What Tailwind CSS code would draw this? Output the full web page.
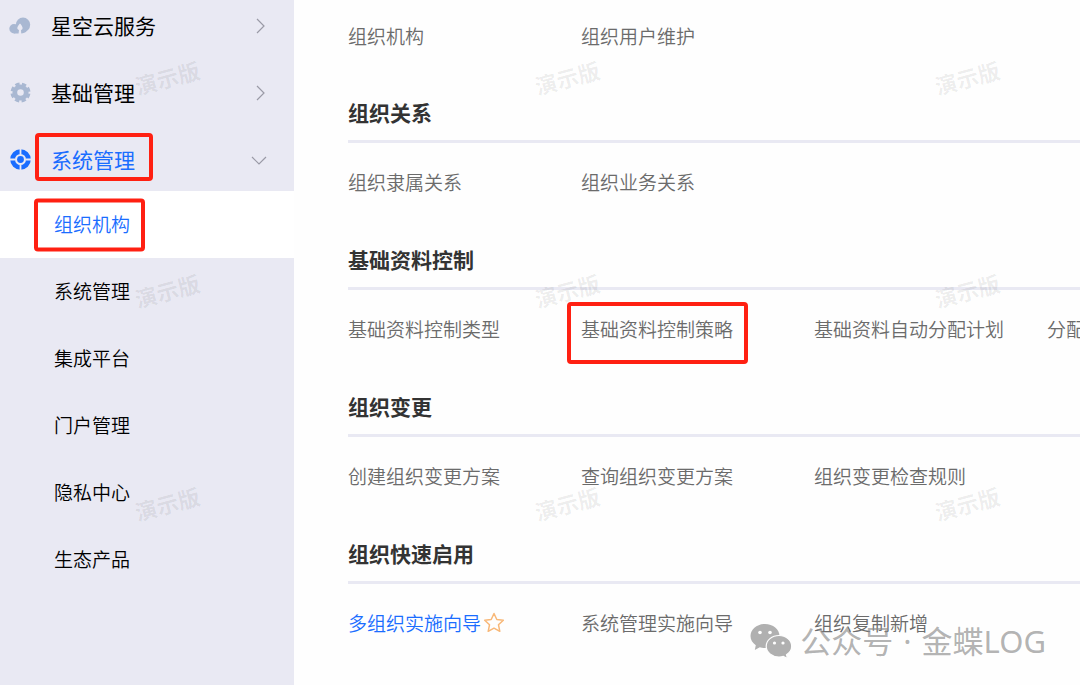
<!DOCTYPE html>
<html lang="zh-CN">

<head>
    <meta charset="UTF-8" />
    <meta name="viewport" content="width=device-width, initial-scale=1.0" />
    <title>系统管理 - 组织机构</title>
    <script src="https://cdn.jsdelivr.net/npm/@tailwindcss/browser@4"></script>
</head>

<body class="font-['Noto_Sans_CJK_SC',sans-serif] bg-[#fefefe] text-[#6b6b6b] overflow-hidden">
    <div class="relative flex h-screen overflow-hidden">

        <!-- Sidebar -->
        <aside class="w-[294px] shrink-0 bg-[#e9e9f3] text-black">
            <nav class="-mt-[10px] flex flex-col">
                <button type="button" class="flex h-[67px] w-full items-center pt-1 pl-2 pr-[27px] text-[21px]">
                    <svg viewBox="0 0 24 24" class="h-6 w-6 shrink-0" fill="#a9b8d2" aria-hidden="true">
                        <circle cx="6" cy="14.800" r="4.700" />
                        <circle cx="15" cy="10.800" r="7.200" />
                        <path d="M6 19.500l3-9 8 2 2 4c-1.500 2.200-3.500 3-6 3z" />
                        <path d="M12 9.500c1.300 1.400 2.600 3 2.600 4.600 0 1.200-.8 1.900-1.600 1.900l.3 4.200h-2.800L11 16c-.9 0-1.700-.8-1.700-1.900 0-1.600 1.500-3.200 2.700-4.600z" fill="#e9e9f3" />
                    </svg>
                    <span class="ml-[19px]">星空云服务</span>
                    <svg viewBox="0 0 16 16" class="ml-auto h-4 w-4" fill="none" stroke="#9a9aa6" stroke-width="1.200" aria-hidden="true">
                        <path d="M6 1l7 7-7 7" />
                    </svg>
                </button>
                <button type="button" class="flex h-[67px] w-full items-center pt-1 pl-2 pr-[27px] text-[21px]">
                    <svg viewBox="0 0 24 24" class="h-6 w-6 shrink-0" fill="none" stroke="#a9b8d2" aria-hidden="true">
                        <circle cx="12.500" cy="11.500" r="5.700" stroke-width="4.800" />
                        <circle cx="12.500" cy="11.500" r="8.300" stroke-width="3.400" stroke-dasharray="4.200 2.320" stroke-dashoffset="-1.160" />
                    </svg>
                    <span class="ml-[19px]">基础管理</span>
                    <svg viewBox="0 0 16 16" class="ml-auto h-4 w-4" fill="none" stroke="#9a9aa6" stroke-width="1.200" aria-hidden="true">
                        <path d="M6 1l7 7-7 7" />
                    </svg>
                </button>
                <button type="button" aria-expanded="true" class="flex h-[67px] w-full items-center pt-1 pl-2 pr-[27px] text-[21px] text-[#1a6dff]">
                    <svg viewBox="0 0 24 24" class="h-6 w-6 shrink-0" aria-hidden="true">
                        <circle cx="12.500" cy="11.500" r="7.900" fill="none" stroke="#1a6dff" stroke-width="4.800" />
                        <path d="M12.500 .5v6M12.500 16.500v6M1.500 11.500h6M17.500 11.500h6" stroke="#e9e9f3" stroke-width="1.800" />
                        <circle cx="12.500" cy="11.500" r="3.400" fill="#1a6dff" />
                    </svg>
                    <span class="relative ml-[19px]">系统管理
                        <i class="absolute -left-4 top-1/2 h-[48px] w-[118px] -translate-y-[27px] rounded border-4 border-[#ff2012]"></i>
                    </span>
                    <svg viewBox="0 0 16 16" class="ml-auto h-4 w-4" fill="none" stroke="#9a9aa6" stroke-width="1.200" aria-hidden="true">
                        <path d="M1 5l7 7 7-7" />
                    </svg>
                </button>

                <div class="flex flex-col text-[19px] font-[350]">
                    <a href="#" class="flex h-[67px] items-center bg-white pl-[54px] text-[#1a6dff]">
                        <span class="relative">组织机构
                            <i class="absolute -left-5 top-1/2 h-[53px] w-[111px] -translate-y-1/2 rounded border-4 border-[#ff2012]"></i>
                        </span>
                    </a>
                    <a href="#" class="flex h-[67px] items-center pl-[54px]">系统管理</a>
                    <a href="#" class="flex h-[67px] items-center pl-[54px]">集成平台</a>
                    <a href="#" class="flex h-[67px] items-center pl-[54px]">门户管理</a>
                    <a href="#" class="flex h-[67px] items-center pl-[54px]">隐私中心</a>
                    <a href="#" class="flex h-[67px] items-center pl-[54px]">生态产品</a>
                </div>
            </nav>
        </aside>

        <!-- Function list -->
        <main class="min-w-0 flex-1 overflow-hidden pl-[54px] pt-[21px] text-[19px] font-[350] leading-[30px] whitespace-nowrap">
            <div class="grid grid-flow-col auto-cols-[233px] justify-start">
                <a href="#">组织机构</a>
                <a href="#">组织用户维护</a>
            </div>

            <section class="mt-[46px] h-[101px]">
                <h2 class="border-b-3 border-[#e9e9f3] pb-[13px] text-[21px] font-bold text-[#333333]">组织关系</h2>
                <div class="mt-6 grid grid-flow-col auto-cols-[233px] justify-start">
                    <a href="#">组织隶属关系</a>
                    <a href="#">组织业务关系</a>
                </div>
            </section>

            <section class="mt-[46px] h-[101px]">
                <h2 class="border-b-3 border-[#e9e9f3] pb-[13px] text-[21px] font-bold text-[#333333]">基础资料控制</h2>
                <div class="mt-6 grid grid-flow-col auto-cols-[233px] justify-start">
                    <a href="#">基础资料控制类型</a>
                    <a href="#" class="relative">基础资料控制策略
                        <i class="absolute -left-[14px] -top-3 h-[62px] w-[181px] rounded border-4 border-[#ff2012]"></i>
                    </a>
                    <a href="#">基础资料自动分配计划</a>
                    <a href="#">分配</a>
                </div>
            </section>

            <section class="mt-[46px] h-[101px]">
                <h2 class="border-b-3 border-[#e9e9f3] pb-[13px] text-[21px] font-bold text-[#333333]">组织变更</h2>
                <div class="mt-6 grid grid-flow-col auto-cols-[233px] justify-start">
                    <a href="#">创建组织变更方案</a>
                    <a href="#">查询组织变更方案</a>
                    <a href="#">组织变更检查规则</a>
                </div>
            </section>

            <section class="mt-[46px] h-[101px]">
                <h2 class="border-b-3 border-[#e9e9f3] pb-[13px] text-[21px] font-bold text-[#333333]">组织快速启用</h2>
                <div class="mt-6 grid grid-flow-col auto-cols-[233px] justify-start">
                    <div class="flex items-center gap-0.5">
                        <a href="#" class="text-[#1a6dff]">多组织实施向导</a>
                        <button type="button" aria-label="收藏">
                            <svg viewBox="0 0 22 22" class="h-[22px] w-[22px]" fill="none" stroke="#f8b878" stroke-width="1.500" stroke-linejoin="round" aria-hidden="true">
                                <path d="M11 1.500l2.800 6 6.500.8-4.800 4.500 1.300 6.500-5.800-3.100-5.800 3.100 1.300-6.500L1.700 8.300l6.500-.8z" />
                            </svg>
                        </button>
                    </div>
                    <a href="#">系统管理实施向导</a>
                    <a href="#">组织复制新增</a>
                </div>
            </section>
        </main>

        <!-- Tiled demo watermark -->
        <div class="pointer-events-none absolute -left-[33px] -top-[30px] grid auto-rows-[213px] grid-cols-[400px_400px_400px] place-items-center text-[22px] font-bold leading-none text-black/7" aria-hidden="true">
            <span class="-rotate-15">演示版</span>
            <span class="-rotate-15">演示版</span>
            <span class="-rotate-15">演示版</span>
            <span class="-rotate-15">演示版</span>
            <span class="-rotate-15">演示版</span>
            <span class="-rotate-15">演示版</span>
            <span class="-rotate-15">演示版</span>
            <span class="-rotate-15">演示版</span>
            <span class="-rotate-15">演示版</span>
        </div>

        <!-- Account signature -->
        <div class="pointer-events-none absolute bottom-[22px] right-[34px] flex items-center gap-2 font-['Noto_Sans','Noto_Sans_CJK_SC',sans-serif] text-[31px] leading-[44px] whitespace-nowrap text-[#888888]/65">
            <svg viewBox="0 0 42 36" class="h-9 w-[42px]" aria-hidden="true">
                <path fill="#b0b0b0" d="M15 1C7 1 .5 6.300.5 13c0 3.800 2 7 5.300 9.200L4.800 27l5-2.800c1.700.5 3.400.8 5.200.8 8 0 14.500-5.300 14.500-12S23 1 15 1z" />
                <path fill="#b0b0b0" stroke="#fefefe" stroke-width="1.200" d="M29 12.500c-7 0-12.800 4.800-12.800 10.800S22 34 29 34c1.500 0 3-.2 4.300-.6l4.200 2.200-1-3.900c3.200-2 5.200-5 5.200-8.400 0-6-5.700-10.800-12.700-10.800z" />
                <g fill="#fefefe">
                    <circle cx="10" cy="9.500" r="1.800" />
                    <circle cx="20" cy="9.500" r="1.800" />
                    <circle cx="24.500" cy="20" r="1.600" />
                    <circle cx="33" cy="20" r="1.600" />
                </g>
            </svg>
            <span>公众号 <span class="mx-0.5">·</span> 金蝶LOG</span>
        </div>
    </div>
</body>

</html>
